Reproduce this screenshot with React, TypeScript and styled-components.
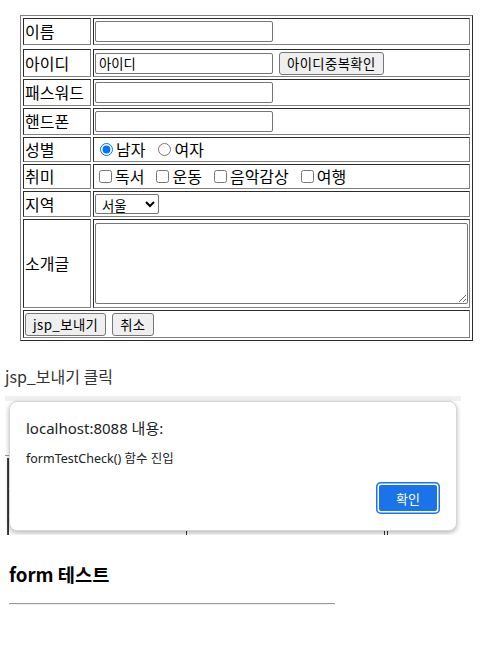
import React from 'react'
import styled, { createGlobalStyle } from 'styled-components'

const GlobalStyle = createGlobalStyle`
  html, body {
    margin: 0;
    padding: 0;
    background: #fff;
  }
  body {
    font-family: 'Noto Sans CJK KR', 'Noto Sans', sans-serif;
    color: #000;
  }
  * {
    box-sizing: border-box;
  }
`

const Page = styled.div`
  width: 482px;
  min-height: 665px;
  padding-top: 15px;
`

const FormTable = styled.div`
  margin-left: 20px;
  width: 453px;
  border: 1px outset grey;
  padding: 2px;
  display: flex;
  flex-direction: column;
  gap: 2px;
`

const Row = styled.div<{ $h: number; $after?: number }>`
  display: flex;
  gap: 2px;
  height: ${(p) => p.$h}px;
  margin-bottom: ${(p) => p.$after ?? 0}px;
`

const Cell = styled.div<{ $label?: boolean }>`
  border: 1px inset grey;
  padding: 1px;
  display: flex;
  align-items: center;
  font-size: 16px;
  line-height: 21px;
  white-space: nowrap;
  ${(p) => (p.$label ? 'width: 68px; flex: none;' : 'flex: 1; min-width: 0;')}
`

const controlFont = `
  font-family: 'Noto Sans CJK KR', 'Noto Sans', sans-serif;
  font-size: 13.33px;
  color: #000;
`

const TextInput = styled.input`
  ${controlFont}
  width: 178px;
  height: 21px;
  margin: 0;
  padding: 1px 3px;
  border: 1px solid #767676;
  border-radius: 2px;
  background: #fff;
  line-height: 17px;
`

const Button = styled.button<{ $ml?: number }>`
  ${controlFont}
  height: 23px;
  margin: 0 0 0 ${(p) => p.$ml ?? 0}px;
  padding: 0 7px;
  line-height: 19px;
  letter-spacing: 0.4px;
  background: #efefef;
  border: 1px solid #767676;
  border-radius: 3px;
`

const Options = styled.div<{ $gap: number }>`
  display: flex;
  align-items: center;
  gap: ${(p) => p.$gap}px;
`

const Option = styled.label`
  display: flex;
  align-items: center;
  font-size: 16px;
  line-height: 21px;
`

const Radio = styled.input.attrs({ type: 'radio' })`
  width: 13px;
  height: 13px;
  margin: 0 3px 0 5px;
`

const Check = styled.input.attrs({ type: 'checkbox' })`
  width: 13px;
  height: 13px;
  margin: 0 3px 0 4px;
`

const Select = styled.select`
  ${controlFont}
  width: 64px;
  height: 20px;
  margin: 0;
  padding: 0 0 0 2px;
  border: 1px solid #767676;
  border-radius: 2px;
  background: #fff;
`

const TextArea = styled.textarea`
  ${controlFont}
  width: 100%;
  height: 81px;
  margin: 0;
  border: 1px solid #767676;
  border-radius: 2px;
`

const Caption = styled.p`
  margin: 23px 0 0 5px;
  font-size: 16px;
  line-height: 24px;
  color: #333;
`

const Shot = styled.div`
  position: relative;
  margin: 8px 0 0 5px;
  width: 456px;
  height: 139px;
  overflow: hidden;
`

const Strip = styled.div`
  height: 5px;
  background: #f0f0f0;
`

const BackRule = styled.div`
  margin: 54px 0 0 -1px;
  width: 420px;
  height: 1px;
  background: #9a9a9a;
`

const BackTable = styled.div`
  margin: 2px 0 0 2px;
  display: grid;
  grid-template-columns: 178px 198px 3px 60px;
  grid-auto-rows: 30px 28px 30px;
  border-left: 1px solid #444;
`

const BackCell = styled.div`
  border-left: 1px solid #333;
  border-top: 1px solid #666;
`

const Dialog = styled.div`
  position: absolute;
  left: 4px;
  top: 5px;
  width: 448px;
  height: 130px;
  padding: 16px;
  display: flex;
  flex-direction: column;
  background: #fff;
  border: 1px solid #d6d6d6;
  border-radius: 8px;
  box-shadow: 0 2px 5px rgba(0, 0, 0, 0.28);
  font-family: 'Noto Sans', 'Noto Sans CJK KR', sans-serif;
  color: #202124;
`

const DialogTitle = styled.div`
  font-size: 15px;
  line-height: 20px;
`

const DialogText = styled.div`
  margin-top: 12px;
  font-size: 12.5px;
  line-height: 18px;
`

const DialogFooter = styled.div`
  margin-top: auto;
  display: flex;
  justify-content: flex-end;
`

const OkButton = styled.button`
  width: 64px;
  height: 32px;
  padding: 0;
  border: none;
  border-radius: 5px;
  background: #1a73e8;
  box-shadow: inset 0 0 0 1.5px #1a73e8, inset 0 0 0 3px #fff;
  color: #fff;
  font-family: 'Noto Sans CJK KR', 'Noto Sans', sans-serif;
  font-size: 13px;
`

const Heading = styled.h3`
  margin: 25px 0 0 9px;
  font-size: 18.7px;
  line-height: 27px;
  font-weight: 700;
  color: #000;
`

const Rule = styled.hr`
  margin: 16px 0 0 9px;
  width: 326px;
  height: 0;
  border: none;
  border-top: 1px solid #9a9a9a;
  border-bottom: 1px solid #eeeeee;
`

export default function App() {
  return (
    <Page>
      <GlobalStyle />
      <FormTable>
        <Row $h={27} $after={2}>
          <Cell $label>이름</Cell>
          <Cell>
            <TextInput type="text" />
          </Cell>
        </Row>
        <Row $h={28}>
          <Cell $label>아이디</Cell>
          <Cell>
            <TextInput type="text" defaultValue="아이디" />
            <Button type="button" $ml={6}>
              아이디중복확인
            </Button>
          </Cell>
        </Row>
        <Row $h={27}>
          <Cell $label>패스워드</Cell>
          <Cell>
            <TextInput type="password" />
          </Cell>
        </Row>
        <Row $h={27}>
          <Cell $label>핸드폰</Cell>
          <Cell>
            <TextInput type="text" />
          </Cell>
        </Row>
        <Row $h={25}>
          <Cell $label>성별</Cell>
          <Cell>
            <Options $gap={8}>
              <Option>
                <Radio name="gender" defaultChecked />
                남자
              </Option>
              <Option>
                <Radio name="gender" />
                여자
              </Option>
            </Options>
          </Cell>
        </Row>
        <Row $h={25}>
          <Cell $label>취미</Cell>
          <Cell>
            <Options $gap={8}>
              <Option>
                <Check />
                독서
              </Option>
              <Option>
                <Check />
                운동
              </Option>
              <Option>
                <Check />
                음악감상
              </Option>
              <Option>
                <Check />
                여행
              </Option>
            </Options>
          </Cell>
        </Row>
        <Row $h={26}>
          <Cell $label>지역</Cell>
          <Cell>
            <Select defaultValue="서울">
              <option>서울</option>
              <option>경기</option>
              <option>부산</option>
            </Select>
          </Cell>
        </Row>
        <Row $h={89}>
          <Cell $label>소개글</Cell>
          <Cell>
            <TextArea />
          </Cell>
        </Row>
        <Row $h={28}>
          <Cell>
            <Button type="submit">jsp_보내기</Button>
            <Button type="reset" $ml={6}>
              취소
            </Button>
          </Cell>
        </Row>
      </FormTable>

      <Caption>jsp_보내기 클릭</Caption>

      <Shot>
        <Strip />
        <BackRule />
        <BackTable>
          {Array.from({ length: 12 }).map((_, i) => (
            <BackCell key={i} />
          ))}
        </BackTable>
        <Dialog>
          <DialogTitle>localhost:8088 내용:</DialogTitle>
          <DialogText>formTestCheck() 함수 진입</DialogText>
          <DialogFooter>
            <OkButton type="button">확인</OkButton>
          </DialogFooter>
        </Dialog>
      </Shot>

      <Heading>form 테스트</Heading>
      <Rule />
    </Page>
  )
}
